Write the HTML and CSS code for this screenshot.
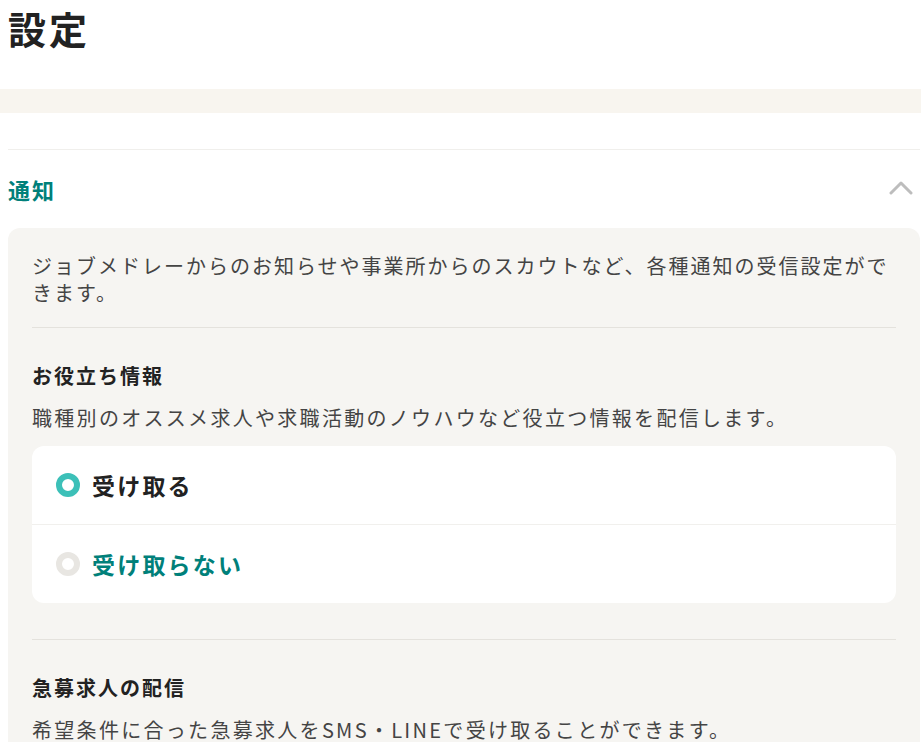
FILE: index.html
```html
<!DOCTYPE html>
<html lang="ja">
<head>
  <meta charset="UTF-8" />
  <meta name="viewport" content="width=device-width, initial-scale=1.0" />
  <title>設定</title>
  <link rel="stylesheet" href="styles.css">
</head>
<body>
  <header class="page-header">
    <h1>設定</h1>
  </header>

  <div class="band"></div>

  <section class="setting">
    <div class="setting-head">
      <h2>通知</h2>
      <svg class="chevron" viewBox="0 0 24 15" fill="none" stroke="#bdbdbd" stroke-width="3" stroke-linecap="round" stroke-linejoin="round">
        <path d="M2 13 L12 3 L22 13"/>
      </svg>
    </div>

    <div class="panel">
      <p class="lead">ジョブメドレーからのお知らせや事業所からのスカウトなど、各種通知の受信設定ができます。</p>

      <div class="group">
        <h3>お役立ち情報</h3>
        <p class="desc">職種別のオススメ求人や求職活動のノウハウなど役立つ情報を配信します。</p>
        <div class="options">
          <label class="option checked">
            <span class="radio"></span>
            <span class="option-text">受け取る</span>
          </label>
          <label class="option">
            <span class="radio"></span>
            <span class="option-text">受け取らない</span>
          </label>
        </div>
      </div>

      <div class="group">
        <h3>急募求人の配信</h3>
        <p class="desc">希望条件に合った急募求人をSMS・LINEで受け取ることができます。</p>
      </div>
    </div>
  </section>
</body>
</html>
```

FILE: styles.css
```css
body {
  font-family: "Noto Sans CJK JP", "Noto Sans", sans-serif;
  background-color: #fff;
  color: #222;
  margin: 0;
}
.page-header {
  padding: 0 8px;
  height: 89px;
}
h1 {
  margin: 0;
  padding-top: 4px;
  font-size: 38px;
  line-height: 48px;
  font-weight: bold;
  letter-spacing: 3px;
}
.band {
  height: 24px;
  background-color: #f8f5ef;
}
.setting {
  margin: 36px 1px 0 8px;
  border-top: 1px solid #f0efec;
}
.setting-head {
  display: flex;
  align-items: center;
  justify-content: space-between;
  height: 78px;
  padding-right: 7px;
}
.setting-head h2 {
  margin: 0;
  font-size: 22px;
  letter-spacing: 2px;
  color: #00807a;
}
.chevron {
  width: 24px;
  height: 15px;
  margin-top: -4px;
}
.panel {
  background-color: #f6f5f2;
  border-radius: 12px 12px 0 0;
  padding: 24px 24px 40px;
}
.lead {
  margin: 0;
  font-size: 20px;
  line-height: 27px;
  letter-spacing: 2px;
  color: #444;
  padding-bottom: 21px;
}
.group {
  border-top: 1px solid #e4e2dd;
  padding-top: 34px;
  padding-bottom: 36px;
}
.group h3 {
  margin: 0 0 15px;
  font-size: 20px;
  line-height: 27px;
  letter-spacing: 2px;
  color: #222;
}
.desc {
  margin: 0;
  font-size: 20px;
  line-height: 27px;
  letter-spacing: 2.3px;
  color: #444;
}
.options {
  margin-top: 15px;
  background-color: #fff;
  border-radius: 12px;
}
.option {
  display: flex;
  align-items: center;
  height: 78px;
  padding-left: 24px;
  cursor: pointer;
}
.option + .option {
  border-top: 1px solid #f1f0ed;
}
.radio {
  width: 12px;
  height: 12px;
  border: 6px solid #e8e6e2;
  border-radius: 50%;
  background: #fff;
  margin-right: 12px;
}
.option.checked .radio {
  border-color: #3cc0b8;
}
.option-text {
  font-size: 23px;
  font-weight: bold;
  letter-spacing: 2.2px;
  color: #00807a;
}
.option.checked .option-text {
  color: #222;
}
```
